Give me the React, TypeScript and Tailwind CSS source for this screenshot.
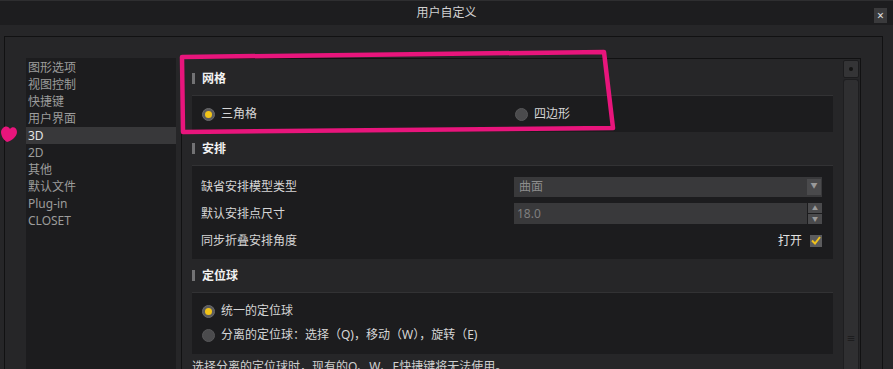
import React from 'react';

const navItems = ['图形选项', '视图控制', '快捷键', '用户界面', '3D', '2D', '其他', '默认文件', 'Plug-in', 'CLOSET'];

function Radio({ checked }: { checked: boolean }) {
  if (checked) {
    return (
      <span className="flex h-[13px] w-[13px] shrink-0 items-center justify-center rounded-full bg-[#5a5a5c] border border-[#6a6a6c]">
        <span className="h-[7px] w-[7px] rounded-full bg-[#f2c418]" />
      </span>
    );
  }
  return <span className="h-[13px] w-[13px] shrink-0 rounded-full bg-[#4b4b4d] border border-[#575759]" />;
}

function SectionHeader({ title }: { title: string }) {
  return (
    <div className="flex h-[33px] items-center">
      <span className="h-[11px] w-[3px] bg-[#727274]" />
      <span className="ml-[7px] text-[12px] font-bold text-[#f2f2f2]">{title}</span>
    </div>
  );
}

export default function App() {
  return (
    <div className="relative flex h-[369px] w-[893px] flex-col overflow-hidden bg-[#232325] font-['Noto_Sans','Noto_Sans_CJK_SC',sans-serif] text-[12px]">
      {/* title bar */}
      <div className="relative flex h-[25px] shrink-0 items-center justify-center border-t border-[#2e2e30] bg-[#1d1d1f] text-[#d2d2d2]">
        用户自定义
        <span className="absolute right-[6px] top-[7px] flex h-[15px] w-[13px] items-center justify-center bg-[#3a3a3c] text-[12px] leading-none text-[#e0e0e0]">
          ×
        </span>
      </div>

      {/* body */}
      <div className="flex flex-1 flex-col bg-[#262628] pl-[4px] pr-[10px] pt-[11px]">
        <div className="flex flex-1 border-l border-r border-t border-[#111112] bg-[#262628] pl-[21px] pt-[21px] pr-[21px]">
          {/* nav list */}
          <div className="flex w-[150px] shrink-0 flex-col bg-[#1c1c1e] pt-[1px]">
            {navItems.map((item) => (
              <div
                key={item}
                className={`flex h-[17px] items-center pl-[2px] ${item === '3D' ? 'bg-[#38383a] text-[#e4e4e4]' : 'text-[#9c9c9c]'}`}
              >
                {item}
              </div>
            ))}
          </div>

          {/* content panel */}
          <div className="ml-[5px] flex flex-1 border-l border-r border-t border-[#111112] bg-[#262628]">
            <div className="flex flex-1 flex-col pl-[10px] pr-[10px] pt-[3px]">
              <SectionHeader title="网格" />
              <div className="grid h-[37px] grid-cols-[313px_1fr] items-center border-t border-[#323234] bg-[#1c1c1e] pl-[10px]">
                <div className="flex items-center gap-[6px] text-[#d6d6d6]">
                  <Radio checked />
                  <span>三角格</span>
                </div>
                <div className="flex items-center gap-[6px] text-[#d6d6d6]">
                  <Radio checked={false} />
                  <span>四边形</span>
                </div>
              </div>

              <SectionHeader title="安排" />
              <div className="flex flex-col gap-[6px] border-t border-[#323234] bg-[#1c1c1e] pb-[8px] pl-[9px] pr-[11px] pt-[10px] text-[#d6d6d6]">
                <div className="grid h-[21px] grid-cols-[313px_1fr] items-center">
                  <span>缺省安排模型类型</span>
                  <div className="flex h-[20px] items-center justify-between bg-[#39393b] pl-[5px] pr-[1px] text-[#8c8c8c]">
                    <span>曲面</span>
                    <span className="flex h-[16px] w-[14px] items-center justify-center bg-[#4a4a4c] text-[7px] text-[#9a9a9a]">▼</span>
                  </div>
                </div>
                <div className="grid h-[21px] grid-cols-[313px_1fr] items-center">
                  <span>默认安排点尺寸</span>
                  <div className="flex h-[21px]">
                    <div className="flex flex-1 items-center bg-[#39393b] pl-[3px] text-[#7e7e7e]">18.0</div>
                    <div className="ml-[1px] flex w-[14px] flex-col gap-[1px]">
                      <span className="flex h-[10px] items-center justify-center bg-[#4a4a4c] text-[6px] text-[#9a9a9a]">▲</span>
                      <span className="flex h-[10px] items-center justify-center bg-[#4a4a4c] text-[6px] text-[#9a9a9a]">▼</span>
                    </div>
                  </div>
                </div>
                <div className="grid h-[21px] grid-cols-[313px_1fr] items-center">
                  <span>同步折叠安排角度</span>
                  <div className="flex items-center justify-end gap-[8px]">
                    <span className="text-[#e2e2e2]">打开</span>
                    <span className="flex h-[12px] w-[12px] items-center justify-center bg-[#5c5c5e]">
                      <svg width="10" height="9" viewBox="0 0 10 9">
                        <path d="M1 4.5 L4 7.5 L9 1" fill="none" stroke="#f0c21c" strokeWidth="2" />
                      </svg>
                    </span>
                  </div>
                </div>
              </div>

              <SectionHeader title="定位球" />
              <div className="flex flex-col border-t border-[#323234] bg-[#1c1c1e] pb-[7px] pl-[10px] pt-[6px] text-[#d6d6d6]">
                <div className="flex h-[24px] items-center gap-[6px]">
                  <Radio checked />
                  <span>统一的定位球</span>
                </div>
                <div className="flex h-[24px] items-center gap-[6px]">
                  <Radio checked={false} />
                  <span>分离的定位球：选择（Q)，移动（W），旋转（E)</span>
                </div>
              </div>
              <div className="flex h-[26px] items-center text-[#cfcfcf]">选择分离的定位球时，现有的Q、W、E快捷键将无法使用。</div>
            </div>

            {/* scrollbar */}
            <div className="mr-[1px] flex w-[16px] shrink-0 flex-col pt-[1px]">
              <div className="flex h-[18px] items-center justify-center rounded-[2px] border border-[#1c1c1e] bg-[#343436]">
                <span className="h-[4px] w-[4px] rounded-full bg-[#141414]" />
              </div>
              <div className="mt-[1px] flex flex-1 flex-col items-center rounded-t-[3px] border-l border-r border-t border-[#1e1e20] bg-[#2f2f31] pt-[254px]">
                <span className="text-[9px] leading-none text-[#0e0e0e]">≡</span>
              </div>
            </div>
          </div>
        </div>
      </div>

      {/* hand-drawn annotation */}
      <svg className="pointer-events-none absolute left-0 top-0" width="893" height="369" viewBox="0 0 893 369">
        <path
          d="M182 57 L604 52 L613 128 L183 132 Z"
          fill="none"
          stroke="#e8157c"
          strokeWidth="4.5"
          strokeLinejoin="round"
        />
        <path d="M3 128 C6 125 9 127 10 129 C12 126 17 127 17 132 C17 137 11 141 7 142 C3 140 1 135 1 132 C1 130 2 129 3 128 Z" fill="#e8157c" />
      </svg>
    </div>
  );
}
